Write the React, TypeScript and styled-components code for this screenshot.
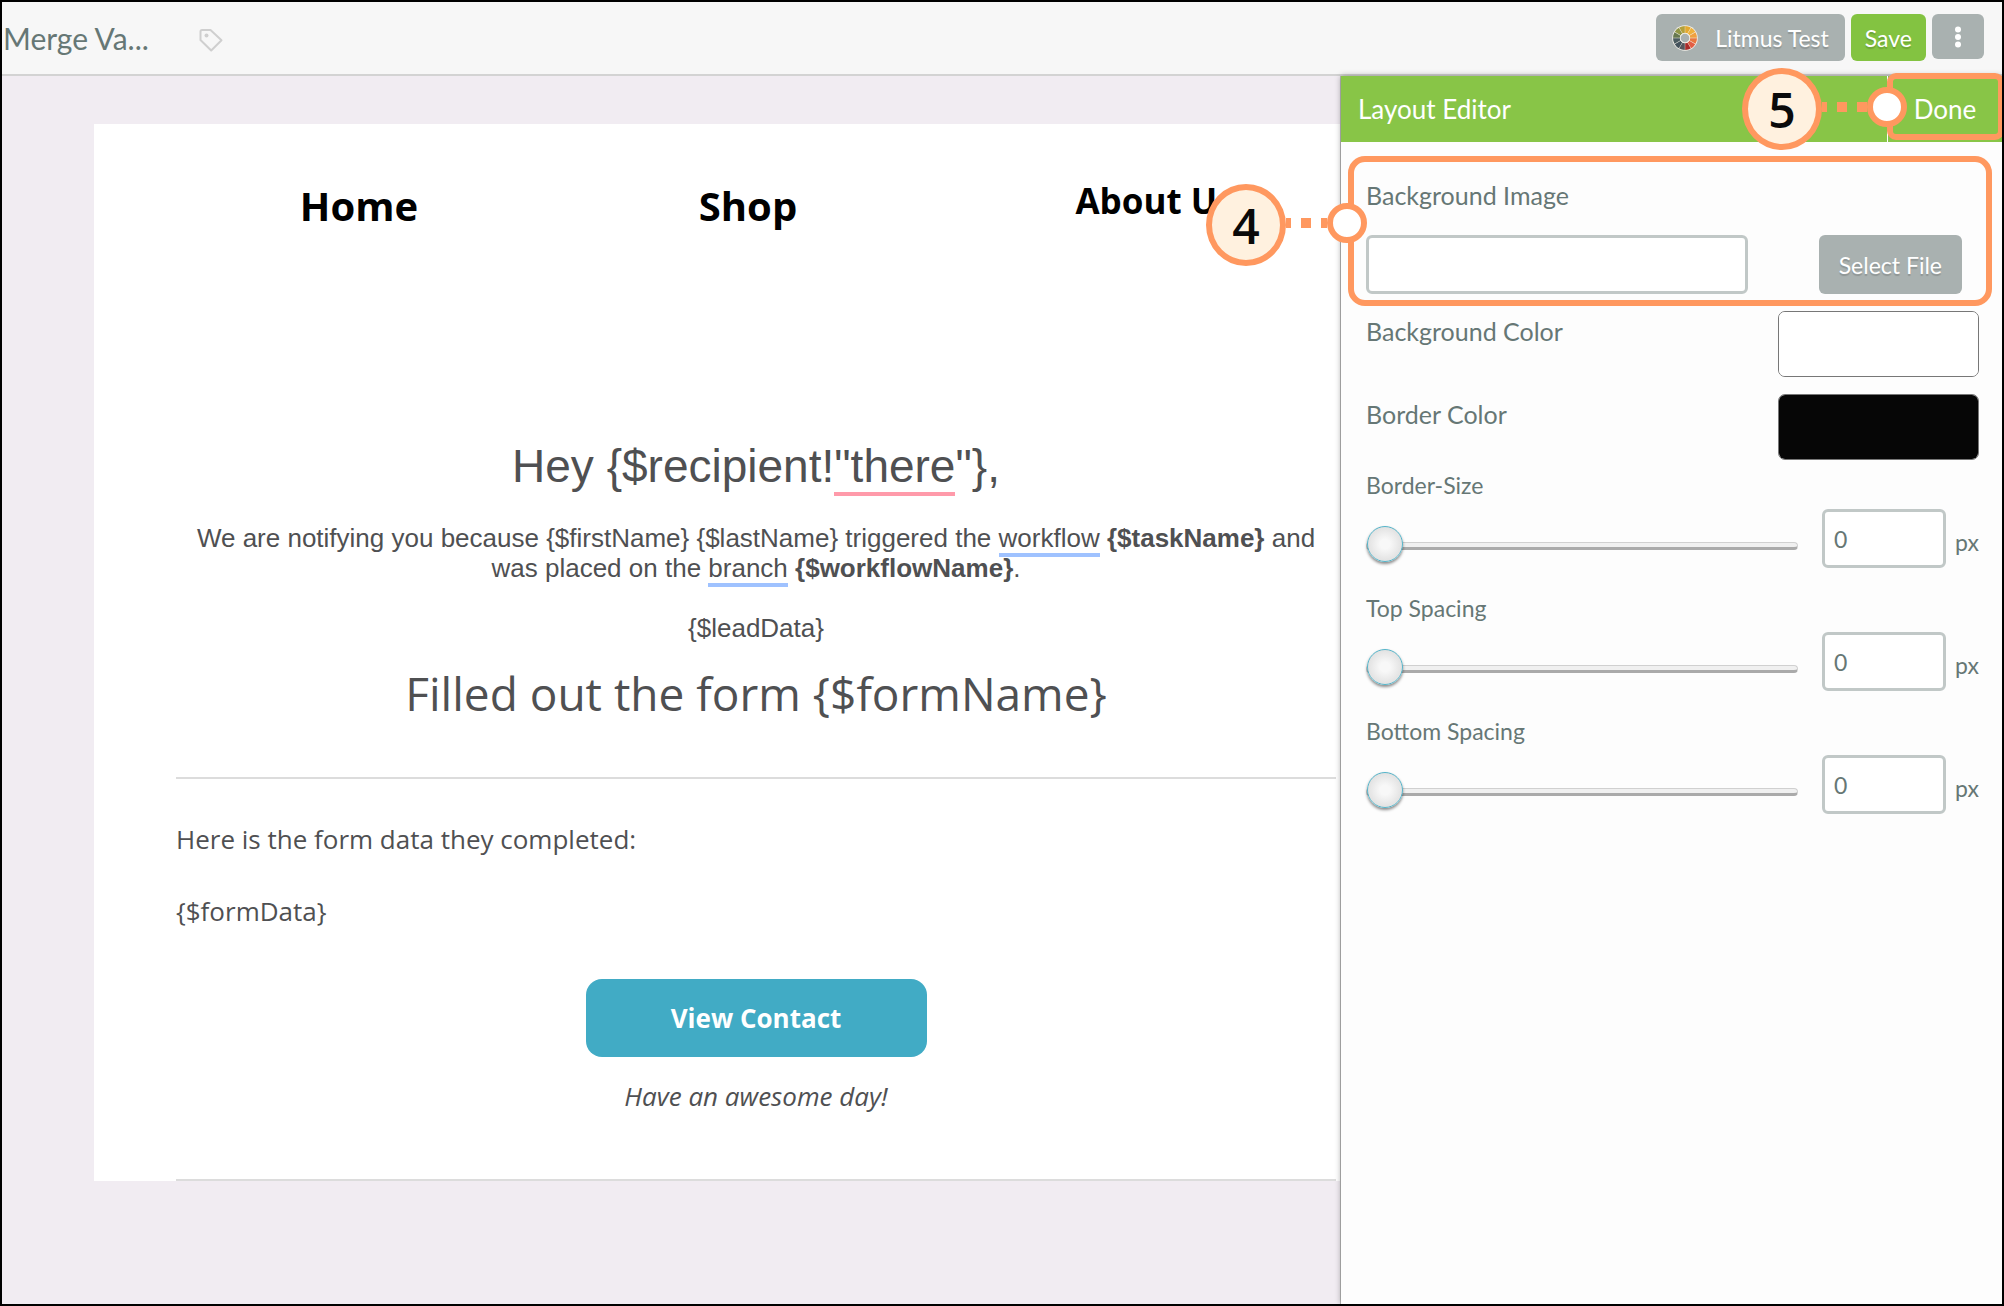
import React, { useState } from "react";
import styled, { createGlobalStyle, css } from "styled-components";

const colors = {
  green: "#88c547",
  saveGreen: "#83c341",
  grey: "#a9b1b0",
  slate: "#667775",
  outline: "#c1c8c7",
  orange: "#ff985f",
  cream: "#fff1df",
  canvas: "#f1ecf2",
  ink: "#4f5052",
};

const GlobalStyle = createGlobalStyle`
  *, *::before, *::after { box-sizing: border-box; }
  body { margin: 0; }
  button, input { font: inherit; }
`;

const Shell = styled.div`
  display: flex;
  flex-direction: column;
  min-height: 100vh;
  border: 2px solid #000;
  overflow: hidden;
  font-family: Lato, "Liberation Sans", sans-serif;
  font-size: 25px;
  color: ${colors.slate};
`;

const TopBar = styled.header`
  display: flex;
  align-items: flex-start;
  justify-content: space-between;
  height: 74px;
  padding: 12px 18px 0 1px;
  background: #f7f7f7;
  border-bottom: 2px solid #d3d3d3;
`;

const TitleGroup = styled.div`
  display: flex;
  align-items: center;
  gap: 50px;
  height: 48px;
`;

const PageTitle = styled.h1`
  margin: 0;
  font-size: 30px;
  font-weight: 400;
`;

const IconButton = styled.button`
  display: flex;
  padding: 4px 0 0;
  border: 0;
  background: none;
`;

const Actions = styled.div`
  display: flex;
  align-items: flex-start;
  gap: 6px;
`;

const Button = styled.button<{ $tone?: "green"; $compact?: boolean }>`
  display: flex;
  align-items: center;
  justify-content: center;
  gap: 17px;
  height: ${(p) => (p.$compact ? 45 : 47)}px;
  padding: 0 ${(p) => (p.$tone ? 14 : 16)}px;
  border: 0;
  border-radius: 6px;
  background: ${(p) => (p.$tone ? colors.saveGreen : colors.grey)};
  color: #fff;
  font-size: 23px;
  line-height: 30px;
  white-space: nowrap;
  text-shadow: 0 2px 1px rgba(0, 0, 0, 0.16);
  ${(p) =>
    p.$compact &&
    css`
      width: 52px;
      padding: 0;
    `}
`;

const Body = styled.div`
  display: flex;
  flex: 1;
`;

const Workspace = styled.main`
  flex: 1;
  min-width: 0;
  padding: 48px 0 0 92px;
  background: ${colors.canvas};
`;

const Sheet = styled.article`
  padding: 54px 5px 0 82px;
  background: #fff;
  color: ${colors.ink};
  font-family: "Open Sans", "Noto Sans", sans-serif;
  font-size: 26px;
`;

const SheetNav = styled.nav`
  display: grid;
  grid-template-columns: 366fr 412fr 402fr;
  justify-items: center;
  height: 258px;
  margin-right: -20px;
`;

const NavItem = styled.a<{ $small?: boolean }>`
  color: #000;
  font-size: ${(p) => (p.$small ? 35 : 40)}px;
  font-weight: 700;
  line-height: ${(p) => (p.$small ? 46 : 56)}px;
  text-decoration: none;
  white-space: nowrap;
`;

const Greeting = styled.h2`
  margin: 0 0 27px;
  font-family: "Liberation Sans", Arial, sans-serif;
  font-size: 46px;
  font-weight: 400;
  line-height: 60px;
  text-align: center;
`;

const Notice = styled.p`
  margin: 0 0 30px;
  font-family: "Liberation Sans", Arial, sans-serif;
  font-size: 26px;
  line-height: 30px;
  text-align: center;
`;

const Flagged = styled.span<{ $color: string }>`
  box-shadow: 0 4px 0 ${(p) => p.$color};
`;

const FormHeading = styled.h2`
  margin: 0 0 64px;
  font-size: 46px;
  font-weight: 400;
  line-height: 40px;
  text-align: center;
`;

const Rule = styled.hr`
  height: 2px;
  margin: 0;
  border: 0;
  background: #dcdcdc;
`;

const Copy = styled.p`
  margin: 0 0 36px;
  line-height: 36px;
`;

const FormCopy = styled.section`
  padding-top: 42px;
`;

const Closing = styled.section`
  display: flex;
  flex-direction: column;
  align-items: center;
  gap: 21px;
  padding: 14px 0 65px;
`;

const ContactLink = styled.button`
  width: 341px;
  height: 78px;
  border: 0;
  border-radius: 16px;
  background: #41abc5;
  color: #fff;
  font-weight: 700;
`;

const SignOff = styled.em`
  line-height: 36px;
`;

const Panel = styled.aside`
  position: relative;
  flex: 0 0 661px;
  background: #fdfdfd;
  box-shadow: 0 0 6px rgba(0, 0, 0, 0.35), -1px 0 0 #bbb;
`;

const PanelHeader = styled.header`
  display: flex;
  justify-content: space-between;
  height: 66px;
  padding-left: 17px;
  background: ${colors.green};
  color: #fff;
`;

const PanelTitle = styled.h2`
  margin: 0;
  font-size: 26px;
  font-weight: 400;
  line-height: 66px;
`;

const DoneButton = styled.button`
  width: 115px;
  padding: 0;
  border: 0;
  border-left: 1px solid #fff;
  background: none;
  color: #fff;
  font-size: 26px;
`;

const Fields = styled.form`
  display: flex;
  flex-direction: column;
  padding: 35px 23px 0 25px;
`;

const ImageField = styled.div`
  display: grid;
  grid-template-columns: 382px auto;
  justify-content: space-between;
  gap: 22px 0;
  padding-right: 17px;
`;

const Label = styled.label`
  line-height: 36px;
`;

const TextInput = styled.input`
  width: 100%;
  height: 59px;
  padding: 0 9px;
  border: 3px solid ${colors.outline};
  border-radius: 6px;
  outline: 0;
  background: #fff;
  color: ${colors.slate};
`;

const FileButton = styled(Button)`
  height: 59px;
  padding: 0 20px;
`;

const ImageLabel = styled(Label)`
  grid-column: 1 / -1;
`;

const SwatchRow = styled.div`
  display: flex;
  justify-content: space-between;
  margin-top: 17px;
`;

const SwatchLabel = styled(Label)`
  line-height: 40px;
`;

const Swatch = styled.input`
  width: 201px;
  height: 66px;
  padding: 0;
  border: 1px solid #777;
  border-radius: 7px;
  appearance: none;
  overflow: hidden;
  background: none;

  &::-webkit-color-swatch-wrapper { padding: 0; }
  &::-webkit-color-swatch { border: 0; }
`;

const SliderGroup = styled.div`
  display: grid;
  grid-template-columns: 432px auto;
  grid-template-rows: 39px auto;
  justify-content: space-between;
  height: 123px;
`;

const SliderLabel = styled(Label)`
  grid-column: 1 / -1;
  font-size: 23px;
  line-height: 30px;
`;

const Sliders = styled.div`
  margin-top: 10px;
`;

const Slider = styled.input`
  width: 100%;
  height: 38px;
  margin: 18px 0 0;
  appearance: none;
  background: none;

  &::-webkit-slider-runnable-track {
    height: 8px;
    border: 1px solid #d0d0d0;
    border-bottom: 3px solid #aaa;
    border-radius: 5px;
    background: #f0f0f0;
  }

  &::-webkit-slider-thumb {
    appearance: none;
    width: 36px;
    height: 36px;
    margin-top: -17px;
    border: 1px solid #55b4c9;
    border-radius: 50%;
    background: radial-gradient(circle, #f8f8f8 20%, #e0e0e0 75%);
    box-shadow: 0 2px 3px rgba(0, 0, 0, 0.45);
  }
`;

const NumberBox = styled.div`
  display: flex;
  gap: 9px;
  font-size: 23px;
`;

const NumberInput = styled(TextInput)`
  width: 124px;
`;

const Unit = styled.span`
  line-height: 66px;
`;

const Highlight = styled.div`
  position: absolute;
  z-index: 2;
  top: 80px;
  left: 7px;
  right: 10px;
  height: 150px;
  border: 6px solid ${colors.orange};
  border-radius: 17px;
  pointer-events: none;
`;

const DoneHighlight = styled(Highlight)`
  top: -3px;
  left: auto;
  right: -2px;
  width: 117px;
  height: 67px;
  border-radius: 9px;
`;

const Callout = styled.div<{ $x: number; $y: number }>`
  position: absolute;
  z-index: 3;
  left: ${(p) => p.$x}px;
  top: ${(p) => p.$y}px;
  display: flex;
  align-items: center;
  pointer-events: none;
`;

const StepBadge = styled.span`
  display: flex;
  align-items: center;
  justify-content: center;
  width: 80px;
  height: 82px;
  border: 6px solid ${colors.orange};
  border-radius: 50%;
  background: ${colors.cream};
  color: #0a0a0a;
  font-family: "Open Sans", "Noto Sans", sans-serif;
  font-size: 48px;
  font-weight: 600;
`;

const Leader = styled.span`
  display: flex;
  align-items: center;
  padding-bottom: 4px;
`;

const Dots = styled.span<{ $length: number }>`
  width: ${(p) => p.$length}px;
  height: 10px;
  background: repeating-linear-gradient(90deg, ${colors.orange} 0 5px, transparent 5px 15px, ${colors.orange} 15px 20px);
`;

const Anchor = styled.span`
  width: 40px;
  height: 40px;
  border: 6px solid ${colors.orange};
  border-radius: 50%;
  background: #fff;
`;

const TagIcon = () => (
  <svg width="24" height="24" viewBox="0 0 24 24" fill="none" stroke="#cfcfcf" strokeWidth="2" strokeLinejoin="round" aria-hidden="true">
    <path d="M3 2h8.500L22.500 12.200 12.200 22.500 1.500 12V3.500Q1.500 2 3 2Z" />
    <circle cx="7.500" cy="7.500" r="2" fill="#cfcfcf" stroke="none" />
  </svg>
);

const wheelColors = [
  "#e3a92f", "#efb13c", "#f0a03f", "#e9763f", "#e25d43", "#a92b2a",
  "#55565c", "#43525c", "#4a5b60", "#66784f", "#8f9545", "#b3a03a",
];

const WheelIcon = () => {
  const point = (r: number, deg: number) => {
    const a = ((deg - 90) * Math.PI) / 180;
    return `${13 + r * Math.cos(a)} ${13 + r * Math.sin(a)}`;
  };
  return (
    <svg width="26" height="26" viewBox="0 0 26 26" aria-hidden="true">
      <circle cx="13" cy="13" r="12.800" fill="#f3f0e8" />
      {wheelColors.map((fill, i) => (
        <path
          key={fill}
          fill={fill}
          d={`M${point(5, i * 30 + 2)}L${point(12, i * 30 + 1)}A12 12 0 0 1 ${point(12, i * 30 + 29)}L${point(5, i * 30 + 28)}Z`}
        />
      ))}
      <circle cx="13" cy="13" r="5.200" fill="#f3f0e8" />
      <circle cx="13" cy="13" r="4.300" fill={colors.grey} />
    </svg>
  );
};

const MoreIcon = () => (
  <svg width="8" height="22" viewBox="0 0 8 22" fill="#fff" aria-hidden="true">
    <circle cx="4" cy="3.500" r="3" />
    <circle cx="4" cy="11" r="3" />
    <circle cx="4" cy="18.500" r="3" />
  </svg>
);

function SliderField({ id, label }: { id: string; label: string }) {
  const [value, setValue] = useState("0");
  return (
    <SliderGroup>
      <SliderLabel htmlFor={id}>{label}</SliderLabel>
      <Slider id={id} type="range" min="0" max="100" value={value} onChange={(e) => setValue(e.target.value)} />
      <NumberBox>
        <NumberInput aria-label={`${label} in pixels`} value={value} onChange={(e) => setValue(e.target.value)} />
        <Unit>px</Unit>
      </NumberBox>
    </SliderGroup>
  );
}

function Step({ number, x, y, length }: { number: number; x: number; y: number; length: number }) {
  return (
    <Callout $x={x} $y={y}>
      <StepBadge>{number}</StepBadge>
      <Leader>
        <Dots $length={length} />
        <Anchor />
      </Leader>
    </Callout>
  );
}

export default function App() {
  const [background, setBackground] = useState("#ffffff");
  const [border, setBorder] = useState("#060606");

  return (
    <Shell>
      <GlobalStyle />
      <TopBar>
        <TitleGroup>
          <PageTitle>Merge Va...</PageTitle>
          <IconButton type="button" aria-label="Tags"><TagIcon /></IconButton>
        </TitleGroup>
        <Actions>
          <Button type="button"><WheelIcon />Litmus Test</Button>
          <Button type="button" $tone="green">Save</Button>
          <Button type="button" $compact aria-label="More options"><MoreIcon /></Button>
        </Actions>
      </TopBar>
      <Body>
        <Workspace>
          <Sheet>
            <SheetNav>
              <NavItem href="#home">Home</NavItem>
              <NavItem href="#shop">Shop</NavItem>
              <NavItem href="#about" $small>About Us</NavItem>
            </SheetNav>
            <Greeting>
              Hey {"{$recipient!"}<Flagged $color="#ff9aaa">"there</Flagged>{"\"},"}
            </Greeting>
            <Notice>
              We are notifying you because {"{$firstName} {$lastName}"} triggered the{" "}
              <Flagged $color="#9fc2ff">workflow</Flagged> <strong>{"{$taskName}"}</strong> and{" "}
              <br />
              was placed on the{" "}
              <Flagged $color="#9fc2ff">branch</Flagged> <strong>{"{$workflowName}"}</strong>.
            </Notice>
            <Notice>{"{$leadData}"}</Notice>
            <FormHeading>Filled out the form {"{$formName}"}</FormHeading>
            <Rule />
            <FormCopy>
              <Copy>Here is the form data they completed:</Copy>
              <Copy>{"{$formData}"}</Copy>
            </FormCopy>
            <Closing>
              <ContactLink type="button">View Contact</ContactLink>
              <SignOff>Have an awesome day!</SignOff>
            </Closing>
            <Rule />
          </Sheet>
        </Workspace>
        <Panel>
          <PanelHeader>
            <PanelTitle>Layout Editor</PanelTitle>
            <DoneButton type="button">Done</DoneButton>
          </PanelHeader>
          <Fields>
            <ImageField>
              <ImageLabel htmlFor="background-image">Background Image</ImageLabel>
              <TextInput id="background-image" type="text" />
              <FileButton type="button">Select File</FileButton>
            </ImageField>
            <SwatchRow>
              <SwatchLabel htmlFor="background-color">Background Color</SwatchLabel>
              <Swatch id="background-color" type="color" value={background} onChange={(e) => setBackground(e.target.value)} />
            </SwatchRow>
            <SwatchRow>
              <SwatchLabel htmlFor="border-color">Border Color</SwatchLabel>
              <Swatch id="border-color" type="color" value={border} onChange={(e) => setBorder(e.target.value)} />
            </SwatchRow>
            <Sliders>
              <SliderField id="border-size" label="Border-Size" />
              <SliderField id="top-spacing" label="Top Spacing" />
              <SliderField id="bottom-spacing" label="Bottom Spacing" />
            </Sliders>
          </Fields>
          <Highlight />
          <DoneHighlight />
          <Step number={4} x={-135} y={108} length={41} />
          <Step number={5} x={401} y={-8} length={45} />
        </Panel>
      </Body>
    </Shell>
  );
}
